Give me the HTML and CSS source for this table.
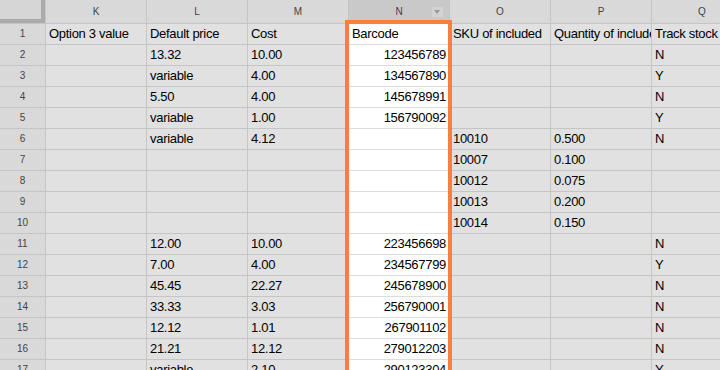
FILE: index.html
```html
<!DOCTYPE html>
<html lang="en">
<head>
  <meta charset="UTF-8">
  <title>Products sheet</title>
  <link rel="stylesheet" href="styles.css">
</head>
<body>

<div class="wrap">

  <div class="sheet">

    <!-- column headers -->
    <div class="corner"></div>
    <div class="colhead">K</div>
    <div class="colhead">L</div>
    <div class="colhead">M</div>
    <div class="colhead picked">N<span class="menu"></span></div>
    <div class="colhead">O</div>
    <div class="colhead">P</div>
    <div class="colhead">Q</div>

    <div class="rownum">1</div>
    <div class="cell">Option 3 value</div>
    <div class="cell">Default price</div>
    <div class="cell">Cost</div>
    <div class="cell bc left">Barcode</div>
    <div class="cell">SKU of included</div>
    <div class="cell">Quantity of included</div>
    <div class="cell">Track stock</div>

    <div class="rownum">2</div>
    <div class="cell"></div>
    <div class="cell">13.32</div>
    <div class="cell">10.00</div>
    <div class="cell bc">123456789</div>
    <div class="cell"></div>
    <div class="cell"></div>
    <div class="cell">N</div>

    <div class="rownum">3</div>
    <div class="cell"></div>
    <div class="cell">variable</div>
    <div class="cell">4.00</div>
    <div class="cell bc">134567890</div>
    <div class="cell"></div>
    <div class="cell"></div>
    <div class="cell">Y</div>

    <div class="rownum">4</div>
    <div class="cell"></div>
    <div class="cell">5.50</div>
    <div class="cell">4.00</div>
    <div class="cell bc">145678991</div>
    <div class="cell"></div>
    <div class="cell"></div>
    <div class="cell">N</div>

    <div class="rownum">5</div>
    <div class="cell"></div>
    <div class="cell">variable</div>
    <div class="cell">1.00</div>
    <div class="cell bc">156790092</div>
    <div class="cell"></div>
    <div class="cell"></div>
    <div class="cell">Y</div>

    <div class="rownum">6</div>
    <div class="cell"></div>
    <div class="cell">variable</div>
    <div class="cell">4.12</div>
    <div class="cell bc"></div>
    <div class="cell">10010</div>
    <div class="cell">0.500</div>
    <div class="cell">N</div>

    <div class="rownum">7</div>
    <div class="cell"></div>
    <div class="cell"></div>
    <div class="cell"></div>
    <div class="cell bc"></div>
    <div class="cell">10007</div>
    <div class="cell">0.100</div>
    <div class="cell"></div>

    <div class="rownum">8</div>
    <div class="cell"></div>
    <div class="cell"></div>
    <div class="cell"></div>
    <div class="cell bc"></div>
    <div class="cell">10012</div>
    <div class="cell">0.075</div>
    <div class="cell"></div>

    <div class="rownum">9</div>
    <div class="cell"></div>
    <div class="cell"></div>
    <div class="cell"></div>
    <div class="cell bc"></div>
    <div class="cell">10013</div>
    <div class="cell">0.200</div>
    <div class="cell"></div>

    <div class="rownum">10</div>
    <div class="cell"></div>
    <div class="cell"></div>
    <div class="cell"></div>
    <div class="cell bc"></div>
    <div class="cell">10014</div>
    <div class="cell">0.150</div>
    <div class="cell"></div>

    <div class="rownum">11</div>
    <div class="cell"></div>
    <div class="cell">12.00</div>
    <div class="cell">10.00</div>
    <div class="cell bc">223456698</div>
    <div class="cell"></div>
    <div class="cell"></div>
    <div class="cell">N</div>

    <div class="rownum">12</div>
    <div class="cell"></div>
    <div class="cell">7.00</div>
    <div class="cell">4.00</div>
    <div class="cell bc">234567799</div>
    <div class="cell"></div>
    <div class="cell"></div>
    <div class="cell">Y</div>

    <div class="rownum">13</div>
    <div class="cell"></div>
    <div class="cell">45.45</div>
    <div class="cell">22.27</div>
    <div class="cell bc">245678900</div>
    <div class="cell"></div>
    <div class="cell"></div>
    <div class="cell">N</div>

    <div class="rownum">14</div>
    <div class="cell"></div>
    <div class="cell">33.33</div>
    <div class="cell">3.03</div>
    <div class="cell bc">256790001</div>
    <div class="cell"></div>
    <div class="cell"></div>
    <div class="cell">N</div>

    <div class="rownum">15</div>
    <div class="cell"></div>
    <div class="cell">12.12</div>
    <div class="cell">1.01</div>
    <div class="cell bc">267901102</div>
    <div class="cell"></div>
    <div class="cell"></div>
    <div class="cell">N</div>

    <div class="rownum">16</div>
    <div class="cell"></div>
    <div class="cell">21.21</div>
    <div class="cell">12.12</div>
    <div class="cell bc">279012203</div>
    <div class="cell"></div>
    <div class="cell"></div>
    <div class="cell">N</div>

    <div class="rownum">17</div>
    <div class="cell"></div>
    <div class="cell">variable</div>
    <div class="cell">2.10</div>
    <div class="cell bc">290123304</div>
    <div class="cell"></div>
    <div class="cell"></div>
    <div class="cell">Y</div>

  </div>

  <!-- selected column outline -->
  <div class="pick-box"></div>

</div>

</body>
</html>
```

FILE: styles.css
```css
html {
  box-sizing: border-box;
}

*, *::before, *::after {
  box-sizing: inherit;
}

body {
  margin: 0;
  width: 720px;
  height: 370px;
  overflow: hidden;
  background: #e1e1e1;
  font-family: "Liberation Sans", Arial, sans-serif;
}

.wrap {
  position: relative;
}

.sheet {
  display: grid;
  grid-template-columns: 45px repeat(7, 100px);
  grid-template-rows: 23px;
  grid-auto-rows: 20px;
  gap: 1px;
  background: #c5c5c5;
  width: max-content;
}

.corner {
  background: #d6d6d6;
  border-right: 4px solid #ababab;
  border-bottom: 4px solid #ababab;
}

.colhead {
  position: relative;
  background: #d9d9d9;
  color: #444;
  font-size: 10px;
  text-align: center;
  line-height: 23px;
}

.colhead.picked {
  background: #c9c9c9;
}

/* little dropdown button on the selected header */
.menu {
  position: absolute;
  right: 6px;
  top: 7px;
  width: 11px;
  height: 10px;
  background: #d3d3d3;
}

.menu::after {
  content: "";
  position: absolute;
  left: 2px;
  top: 3px;
  border-left: 3.5px solid transparent;
  border-right: 3.5px solid transparent;
  border-top: 4px solid #9a9a9a;
}

.rownum {
  background: #d9d9d9;
  color: #444;
  font-size: 10px;
  text-align: center;
  line-height: 20px;
}

.cell {
  background: #e1e1e1;
  color: #000;
  font-size: 13px;
  letter-spacing: -0.3px;
  line-height: 20px;
  padding: 0 3px;
  white-space: nowrap;
  overflow: hidden;
}

.bc {
  background: #fff;
  text-align: right;
  box-shadow: 0 1px 0 #dcdcdc;
}

.bc.left {
  text-align: left;
}

.pick-box {
  position: absolute;
  left: 345px;
  top: 20px;
  width: 107px;
  height: 400px;
  border: 4px solid #fa7f3d;
}
```
